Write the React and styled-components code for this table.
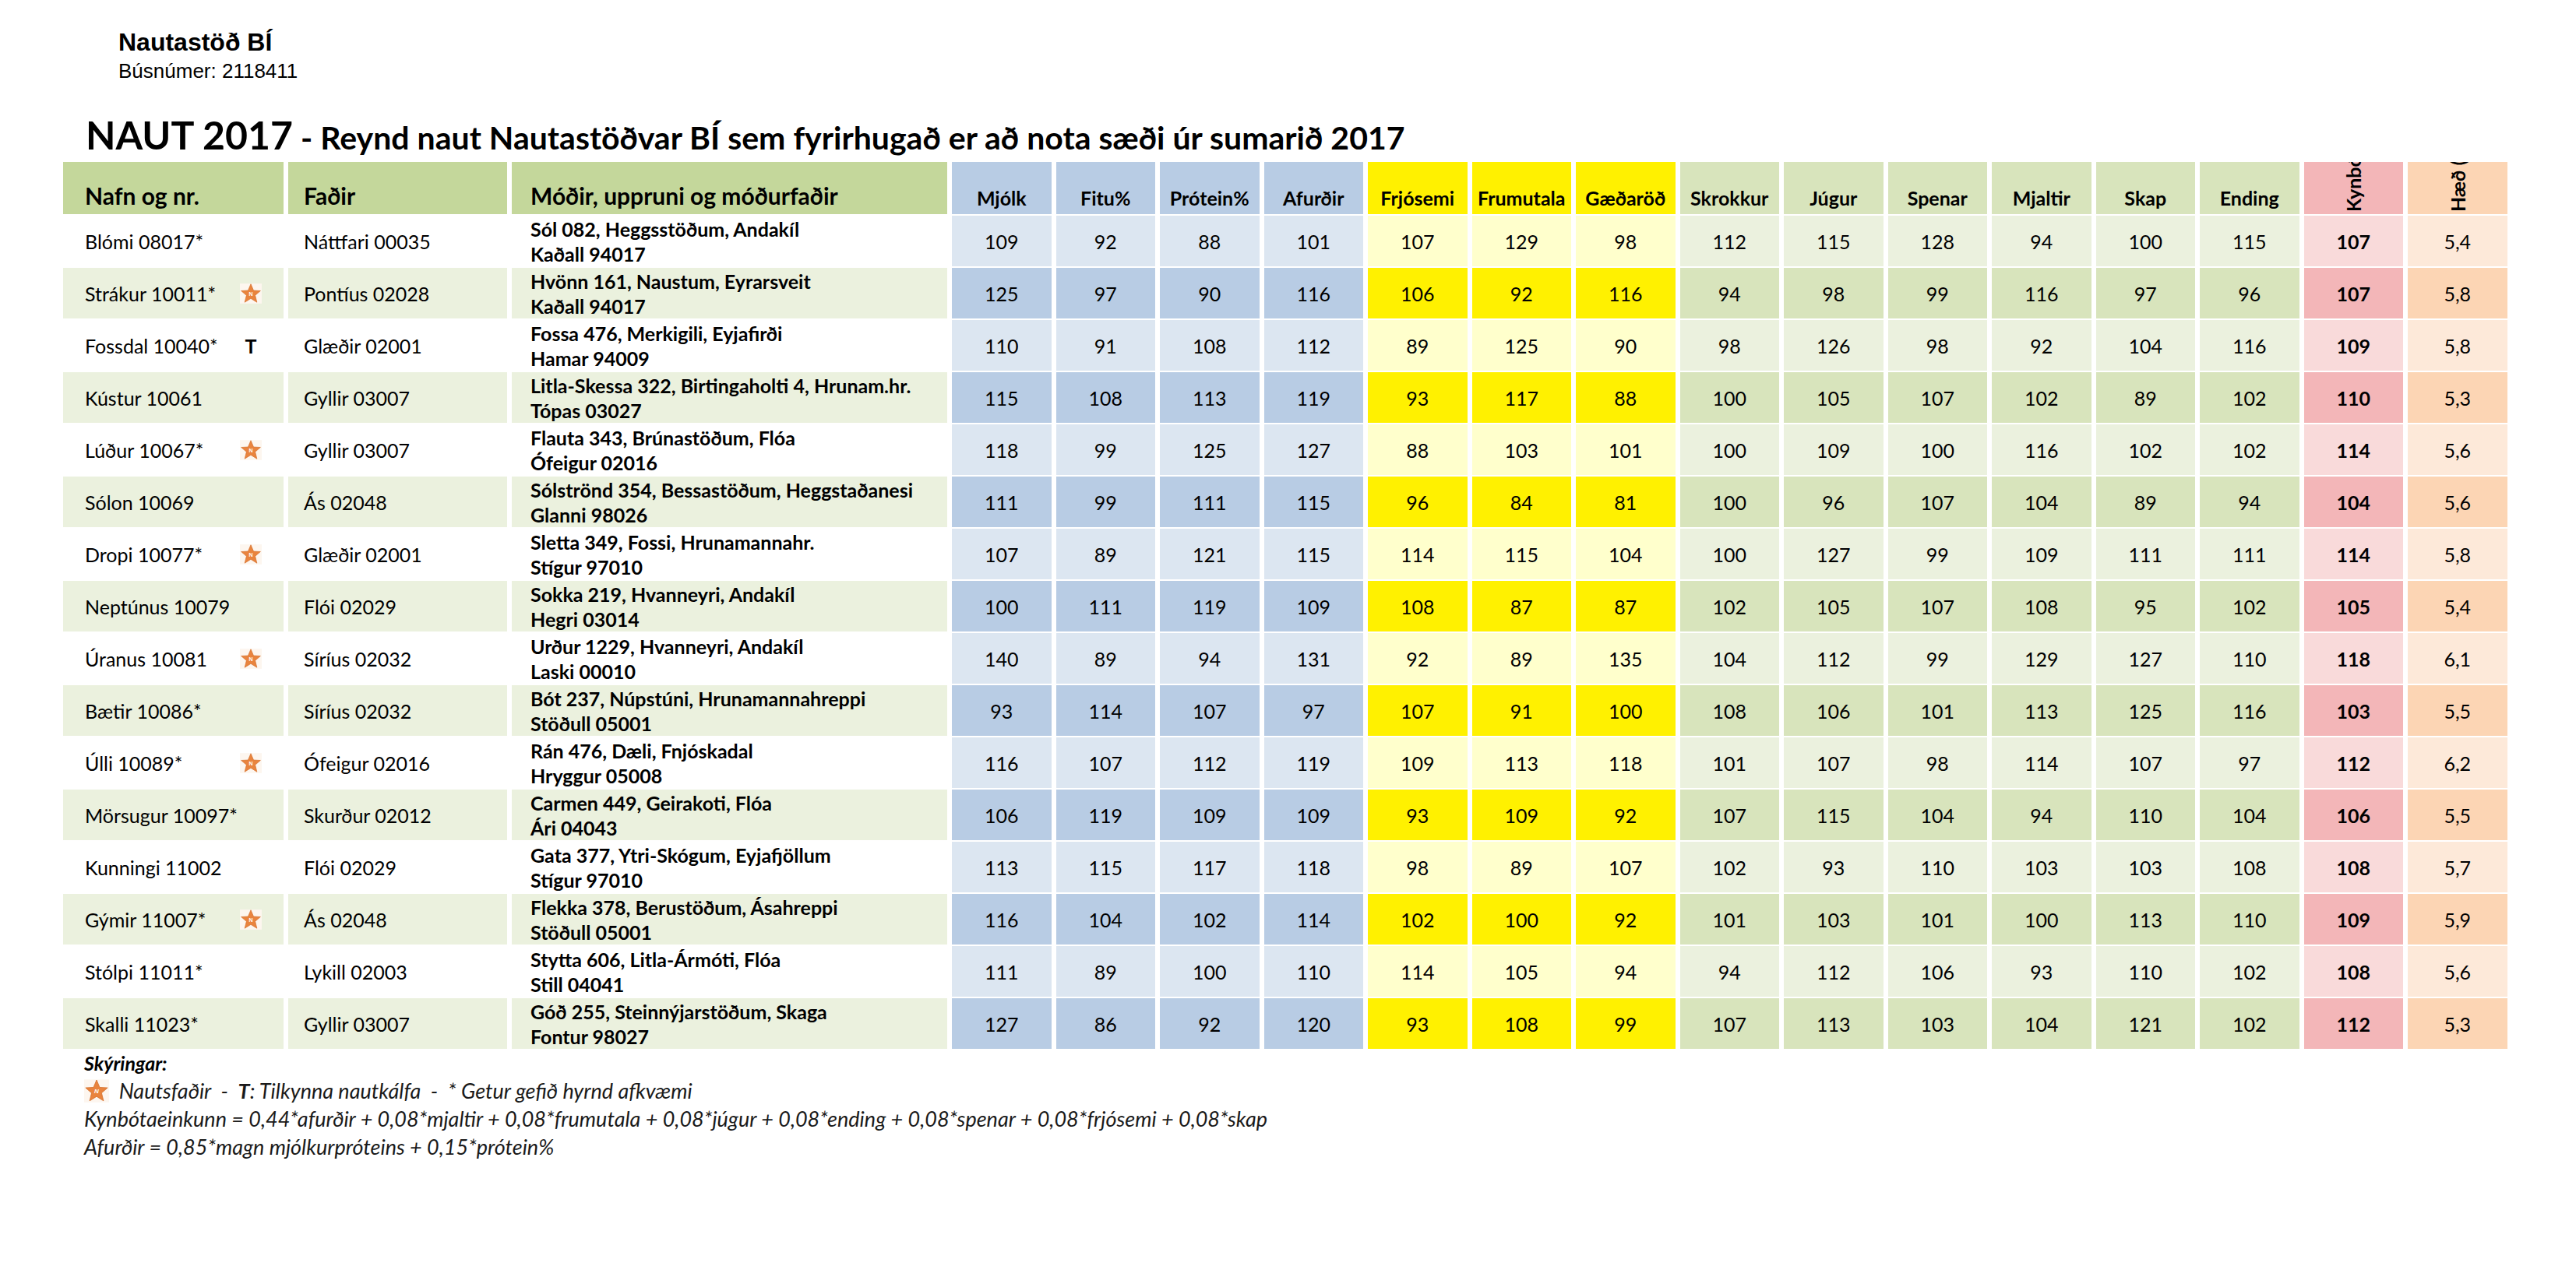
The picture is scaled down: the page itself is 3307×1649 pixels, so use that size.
import React from "react";
import styled, { createGlobalStyle } from "styled-components";

const GlobalStyle = createGlobalStyle`
  html, body {
    margin: 0;
    padding: 0;
    background: #ffffff;
  }
  body {
    font-family: Lato, "Liberation Sans", sans-serif;
    color: #000;
  }
`;

const palette = {
  text: { head: "#c4d79b", dark: "#ebf1de", light: "#ffffff" },
  blue: { head: "#b8cce4", dark: "#b8cce4", light: "#dce6f1" },
  yellow: { head: "#fff100", dark: "#fff100", light: "#ffffcc" },
  green: { head: "#d8e4bc", dark: "#d8e4bc", light: "#ebf1de" },
  red: { head: "#f3b6b8", dark: "#f3b6b8", light: "#f9dada" },
  orange: { head: "#fcd5b4", dark: "#fcd5b4", light: "#fde9d9" },
};

const columns = [
  { label: "Mjólk", tone: "blue" },
  { label: "Fitu%", tone: "blue" },
  { label: "Prótein%", tone: "blue" },
  { label: "Afurðir", tone: "blue" },
  { label: "Frjósemi", tone: "yellow" },
  { label: "Frumutala", tone: "yellow" },
  { label: "Gæðaröð", tone: "yellow" },
  { label: "Skrokkur", tone: "green" },
  { label: "Júgur", tone: "green" },
  { label: "Spenar", tone: "green" },
  { label: "Mjaltir", tone: "green" },
  { label: "Skap", tone: "green" },
  { label: "Ending", tone: "green" },
  { label: "Kynbótaeinkunn", tone: "red", rotated: true, bold: true },
  { label: "Hæð (stig)", tone: "orange", rotated: true },
];

// nafn, mark, faðir, móðir, móðurfaðir, tölur
const bulls = [
  ["Blómi 08017*", "", "Náttfari 00035", "Sól 082, Heggsstöðum, Andakíl", "Kaðall 94017", [109, 92, 88, 101, 107, 129, 98, 112, 115, 128, 94, 100, 115, 107, "5,4"]],
  ["Strákur 10011*", "star", "Pontíus 02028", "Hvönn 161, Naustum, Eyrarsveit", "Kaðall 94017", [125, 97, 90, 116, 106, 92, 116, 94, 98, 99, 116, 97, 96, 107, "5,8"]],
  ["Fossdal 10040*", "T", "Glæðir 02001", "Fossa 476, Merkigili, Eyjafirði", "Hamar 94009", [110, 91, 108, 112, 89, 125, 90, 98, 126, 98, 92, 104, 116, 109, "5,8"]],
  ["Kústur 10061", "", "Gyllir 03007", "Litla-Skessa 322, Birtingaholti 4, Hrunam.hr.", "Tópas 03027", [115, 108, 113, 119, 93, 117, 88, 100, 105, 107, 102, 89, 102, 110, "5,3"]],
  ["Lúður 10067*", "star", "Gyllir 03007", "Flauta 343, Brúnastöðum, Flóa", "Ófeigur 02016", [118, 99, 125, 127, 88, 103, 101, 100, 109, 100, 116, 102, 102, 114, "5,6"]],
  ["Sólon 10069", "", "Ás 02048", "Sólströnd 354, Bessastöðum, Heggstaðanesi", "Glanni 98026", [111, 99, 111, 115, 96, 84, 81, 100, 96, 107, 104, 89, 94, 104, "5,6"]],
  ["Dropi 10077*", "star", "Glæðir 02001", "Sletta 349, Fossi, Hrunamannahr.", "Stígur 97010", [107, 89, 121, 115, 114, 115, 104, 100, 127, 99, 109, 111, 111, 114, "5,8"]],
  ["Neptúnus 10079", "", "Flói 02029", "Sokka 219, Hvanneyri, Andakíl", "Hegri 03014", [100, 111, 119, 109, 108, 87, 87, 102, 105, 107, 108, 95, 102, 105, "5,4"]],
  ["Úranus 10081", "star", "Síríus 02032", "Urður 1229, Hvanneyri, Andakíl", "Laski 00010", [140, 89, 94, 131, 92, 89, 135, 104, 112, 99, 129, 127, 110, 118, "6,1"]],
  ["Bætir 10086*", "", "Síríus 02032", "Bót 237, Núpstúni, Hrunamannahreppi", "Stöðull 05001", [93, 114, 107, 97, 107, 91, 100, 108, 106, 101, 113, 125, 116, 103, "5,5"]],
  ["Úlli 10089*", "star", "Ófeigur 02016", "Rán 476, Dæli, Fnjóskadal", "Hryggur 05008", [116, 107, 112, 119, 109, 113, 118, 101, 107, 98, 114, 107, 97, 112, "6,2"]],
  ["Mörsugur 10097*", "", "Skurður 02012", "Carmen 449, Geirakoti, Flóa", "Ári 04043", [106, 119, 109, 109, 93, 109, 92, 107, 115, 104, 94, 110, 104, 106, "5,5"]],
  ["Kunningi 11002", "", "Flói 02029", "Gata 377, Ytri-Skógum, Eyjafjöllum", "Stígur 97010", [113, 115, 117, 118, 98, 89, 107, 102, 93, 110, 103, 103, 108, 108, "5,7"]],
  ["Gýmir 11007*", "star", "Ás 02048", "Flekka 378, Berustöðum, Ásahreppi", "Stöðull 05001", [116, 104, 102, 114, 102, 100, 92, 101, 103, 101, 100, 113, 110, 109, "5,9"]],
  ["Stólpi 11011*", "", "Lykill 02003", "Stytta 606, Litla-Ármóti, Flóa", "Still 04041", [111, 89, 100, 110, 114, 105, 94, 94, 112, 106, 93, 110, 102, 108, "5,6"]],
  ["Skalli 11023*", "", "Gyllir 03007", "Góð 255, Steinnýjarstöðum, Skaga", "Fontur 98027", [127, 86, 92, 120, 93, 108, 99, 107, 113, 103, 104, 121, 102, 112, "5,3"]],
];

const Page = styled.div`
  width: 3307px;
  height: 1649px;
  box-sizing: border-box;
  padding: 36px 0 0 81px;
  display: flex;
  flex-direction: column;
  overflow: hidden;
`;

const Org = styled.div`
  margin-left: 71px;
  font-family: "Liberation Sans", Arial, sans-serif;
`;

const OrgName = styled.div`
  font-size: 32px;
  line-height: 36px;
  font-weight: 700;
`;

const OrgNumber = styled.div`
  margin-top: 2px;
  font-size: 26px;
  line-height: 34px;
`;

const Title = styled.h1`
  margin: 35px 0 0 29px;
  font-size: 50px;
  line-height: 60px;
  font-weight: 700;
  white-space: nowrap;
`;

const Subtitle = styled.span`
  font-size: 41px;
  line-height: 1;
`;

const Table = styled.div`
  margin-top: 5px;
  display: grid;
  grid-template-columns: 283px 281px 559px repeat(15, 127.5px);
  grid-template-rows: 67px;
  grid-auto-rows: 65px;
  column-gap: 6px;
  row-gap: 2px;
  width: max-content;
`;

const HeadCell = styled.div`
  background: ${(p) => palette[p.$tone].head};
  display: flex;
  align-items: flex-end;
  justify-content: ${(p) => (p.$big ? "flex-start" : "center")};
  padding: 0 0 6px ${(p) => p.$pad || 0}px;
  box-sizing: border-box;
  font-weight: 700;
  font-size: ${(p) => (p.$big ? 30 : 25)}px;
  line-height: ${(p) => (p.$big ? 36 : 30)}px;
  white-space: nowrap;
  overflow: hidden;
`;

const RotHeadCell = styled.div`
  background: ${(p) => palette[p.$tone].head};
  display: flex;
  align-items: flex-end;
  justify-content: center;
  padding-bottom: 3px;
  box-sizing: border-box;
  overflow: hidden;
`;

const RotLabel = styled.span`
  writing-mode: vertical-rl;
  transform: rotate(180deg);
  white-space: nowrap;
  font-weight: 700;
  font-size: 25px;
  line-height: 30px;
`;

const Cell = styled.div`
  background: ${(p) => palette[p.$tone][p.$dark ? "dark" : "light"]};
  display: flex;
  align-items: center;
  box-sizing: border-box;
  font-size: 25px;
  white-space: nowrap;
`;

const NameCell = styled(Cell)`
  padding-left: 28px;
`;

const Name = styled.span`
  flex: 0 0 198px;
`;

const Mark = styled.span`
  width: 30px;
  display: flex;
  justify-content: center;
  font-weight: 700;
`;

const FatherCell = styled(Cell)`
  padding-left: 20px;
`;

const MotherCell = styled(Cell)`
  padding-left: 24px;
  flex-direction: column;
  align-items: flex-start;
  justify-content: center;
  font-weight: 700;
  line-height: 32px;
`;

const NumCell = styled(Cell)`
  justify-content: center;
  font-weight: ${(p) => (p.$bold ? 700 : 400)};
`;

const Notes = styled.div`
  margin-left: 27px;
  font-size: 27px;
  line-height: 36px;
  font-style: italic;
  color: #1a1a1a;
`;

const NotesTitle = styled.div`
  font-weight: 700;
  font-size: 25px;
  color: #000;
`;

const NoteLine = styled.div`
  display: flex;
  align-items: center;
  white-space: pre;
`;

const Strong = styled.b`
  font-weight: 700;
`;

const Star = ({ size = 28 }) => (
  <svg width={size} height={size} viewBox="0 0 24 24">
    <rect x="0" y="1" width="24" height="22" fill="#fdf6ef" />
    <polygon
      points="12,1.5 15,8.6 22.6,9 16.8,14 18.7,21.6 12,17.4 5.3,21.6 7.2,14 1.4,9 9,8.6"
      fill="#e9843e"
      stroke="#d46f2a"
      strokeWidth="0.6"
    />
    <text
      x="12"
      y="14.6"
      textAnchor="middle"
      fontSize="6"
      fontWeight="700"
      fontFamily="Liberation Sans, sans-serif"
      fill="#fff"
    >
      N
    </text>
  </svg>
);

const BullRow = ({ bull, index }) => {
  const [name, mark, father, mother, motherSire, values] = bull;
  const dark = index % 2 === 1;
  return (
    <>
      <NameCell $tone="text" $dark={dark}>
        <Name>{name}</Name>
        <Mark>{mark === "star" ? <Star /> : mark}</Mark>
      </NameCell>
      <FatherCell $tone="text" $dark={dark}>
        {father}
      </FatherCell>
      <MotherCell $tone="text" $dark={dark}>
        <span>{mother}</span>
        <span>{motherSire}</span>
      </MotherCell>
      {values.map((v, i) => (
        <NumCell key={i} $tone={columns[i].tone} $dark={dark} $bold={columns[i].bold}>
          {v}
        </NumCell>
      ))}
    </>
  );
};

export default function App() {
  return (
    <>
      <GlobalStyle />
      <Page>
        <Org>
          <OrgName>Nautastöð BÍ</OrgName>
          <OrgNumber>Búsnúmer: 2118411</OrgNumber>
        </Org>
        <Title>
          NAUT 2017
          <Subtitle> - Reynd naut Nautastöðvar BÍ sem fyrirhugað er að nota sæði úr sumarið 2017</Subtitle>
        </Title>
        <Table>
          <HeadCell $tone="text" $big $pad={28}>Nafn og nr.</HeadCell>
          <HeadCell $tone="text" $big $pad={20}>Faðir</HeadCell>
          <HeadCell $tone="text" $big $pad={24}>Móðir, uppruni og móðurfaðir</HeadCell>
          {columns.map((c) =>
            c.rotated ? (
              <RotHeadCell key={c.label} $tone={c.tone}>
                <RotLabel>{c.label}</RotLabel>
              </RotHeadCell>
            ) : (
              <HeadCell key={c.label} $tone={c.tone}>
                {c.label}
              </HeadCell>
            )
          )}
          {bulls.map((b, i) => (
            <BullRow key={b[0]} bull={b} index={i} />
          ))}
        </Table>
        <Notes>
          <NotesTitle>Skýringar:</NotesTitle>
          <NoteLine>
            <Star size={32} />
            {"  Nautsfaðir  -  "}
            <Strong>T</Strong>
            {": Tilkynna nautkálfa  -  * Getur gefið hyrnd afkvæmi"}
          </NoteLine>
          <NoteLine>
            Kynbótaeinkunn = 0,44*afurðir + 0,08*mjaltir + 0,08*frumutala + 0,08*júgur + 0,08*ending + 0,08*spenar + 0,08*frjósemi + 0,08*skap
          </NoteLine>
          <NoteLine>Afurðir = 0,85*magn mjólkurpróteins + 0,15*prótein%</NoteLine>
        </Notes>
      </Page>
    </>
  );
}
